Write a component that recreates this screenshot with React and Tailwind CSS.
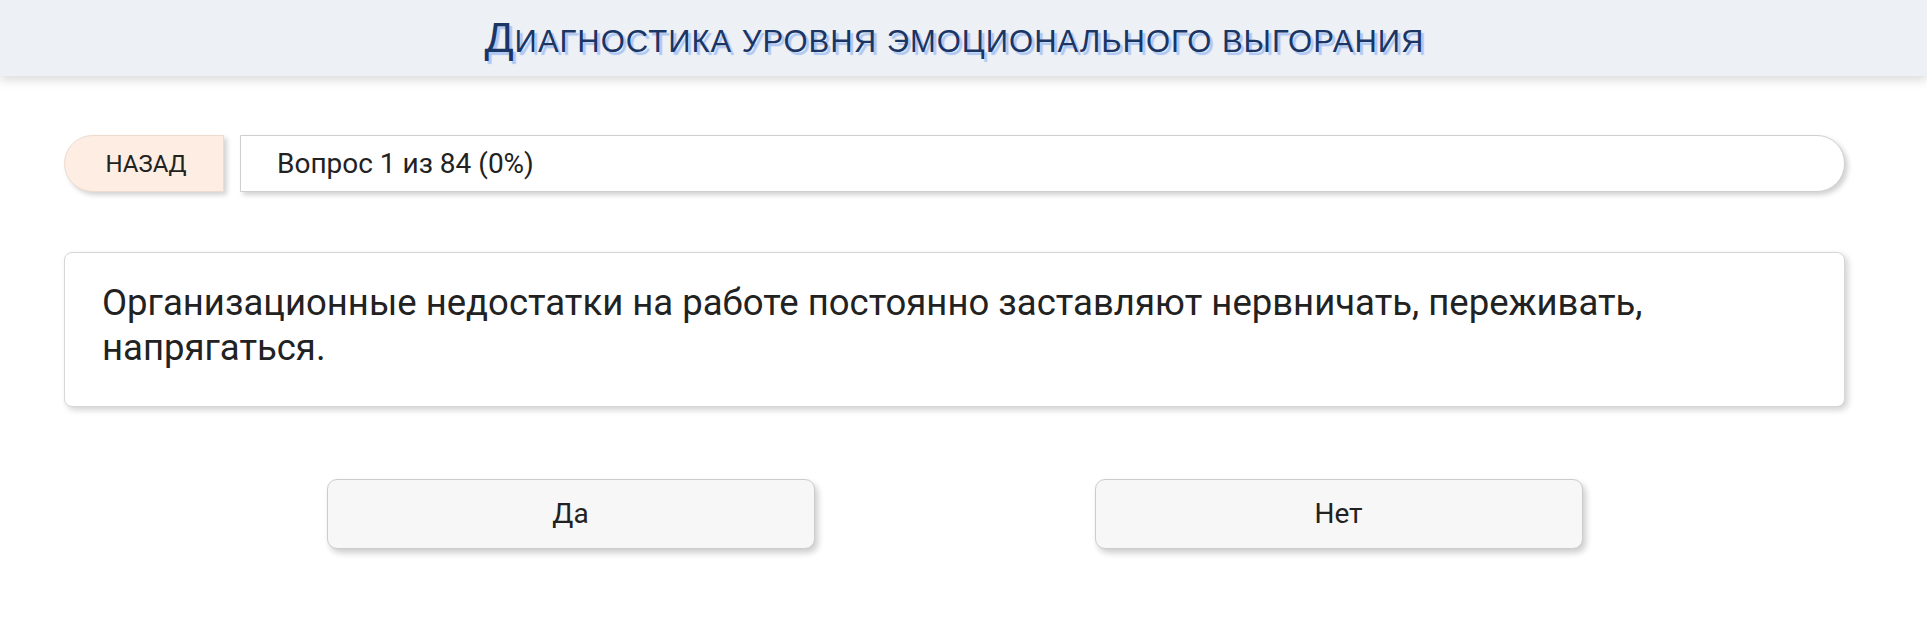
export default function App() {
  return (
    <div className="min-h-[624px] bg-white" style={{ fontFamily: "Roboto, 'Noto Sans', sans-serif" }}>
      <header className="h-[76px] bg-[#edf1f6] flex items-center justify-center shadow-[0_4px_10px_rgba(0,0,0,0.15)] relative">
        <h1
          className="leading-none text-[#1b3564] uppercase [text-shadow:3px_3px_1px_#aec6f2] pb-[2px] pr-[18px] tracking-[1px]"
          style={{ fontFamily: "'Liberation Sans', Arial, sans-serif" }}
        >
          <span className="text-[43px]">Д</span>
          <span className="text-[31px]">иагностика уровня эмоционального выгорания</span>
        </h1>
      </header>

      <main className="pl-[64px] pr-[82px]">
        <div className="mt-[59px] flex gap-[16px] h-[57px]">
          <button className="w-[160px] h-full rounded-l-[29px] bg-[#fdede3] border border-[#ecdcd0] shadow-[3px_3px_5px_rgba(0,0,0,0.18)] text-[24px] text-[#222] uppercase flex items-center justify-center pl-[4px]">
            Назад
          </button>
          <div className="flex-1 h-full rounded-r-[28px] bg-white border border-[#cfcfcf] shadow-[3px_3px_5px_rgba(0,0,0,0.18)] flex items-center pl-[36px] text-[28px] text-[#222]">
            Вопрос 1 из 84 (0%)
          </div>
        </div>

        <div className="mt-[60px] h-[155px] rounded-[8px] bg-white border border-[#d6d6d6] shadow-[3px_3px_6px_rgba(0,0,0,0.18)] px-[37px] pt-[27px]">
          <p className="text-[36.5px] leading-[45px] text-[#222]">
            Организационные недостатки на работе постоянно заставляют нервничать, переживать,
            напрягаться.
          </p>
        </div>

        <div className="mt-[72px] flex justify-center gap-[280px]">
          <button className="w-[488px] h-[70px] rounded-[10px] bg-[#f7f7f7] border border-[#cccccc] shadow-[3px_4px_6px_rgba(0,0,0,0.2)] text-[28px] text-[#222]">
            Да
          </button>
          <button className="w-[488px] h-[70px] rounded-[10px] bg-[#f7f7f7] border border-[#cccccc] shadow-[3px_4px_6px_rgba(0,0,0,0.2)] text-[28px] text-[#222]">
            Нет
          </button>
        </div>
      </main>
    </div>
  );
}
